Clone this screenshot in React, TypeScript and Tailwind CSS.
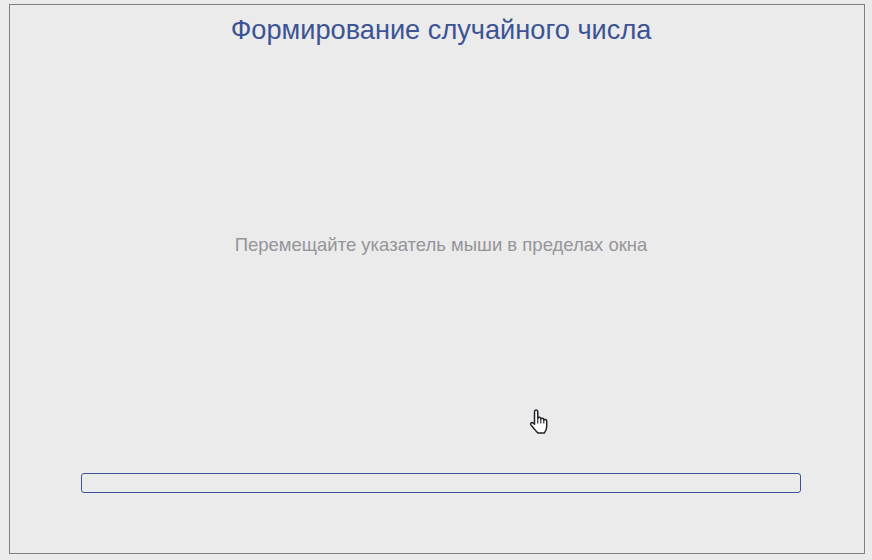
export default function App() {
  return (
    <div className="relative h-[560px] w-[872px] overflow-hidden bg-[#ebebeb] pl-[9px] pt-[4px] font-['Liberation_Sans',Arial,sans-serif]">
      <div className="flex h-[550px] w-[856px] flex-col items-center border border-[#808080] pl-[8px]">
        <h1 className="mt-[8px] h-[34px] text-center text-[27.2px] leading-[34px] font-normal text-[#3c5494]">
          Формирование случайного числа
        </h1>
        <p className="mt-[186px] h-[24px] text-center text-[18.5px] leading-[24px] text-[#95959a]">
          Перемещайте указатель мыши в пределах окна
        </p>
        <div className="mt-[216px] h-[20px] w-[720px] rounded-[3px] border border-[#3c5494]" />
      </div>
      <svg className="absolute left-[529px] top-[408px]" width="22" height="28" viewBox="0 0 22 28">
        <path
          d="M5.500 3.800c0-2.400 3.300-2.400 3.300 0v6.200c.6-1 2.700-1 3 .3l.1.700c.5-1 2.500-.9 2.800.3l.1.800c.6-.9 2.800-.7 2.900.8v5.800c0 3-1.300 4.900-2.400 6.300H9c-1.300-.8-2.600-2.600-3.900-4.300L2 17c-1.200-1.600.9-3.300 2.400-1.800l1.100 1.100Z"
          fill="#ffffff"
          stroke="#22222c"
          strokeWidth="1.500"
          strokeLinejoin="round"
        />
        <path d="M8.800 10v5.500M11.800 11v4.500M14.800 11.800v3.700" stroke="#22222c" strokeWidth="1.100" fill="none" />
      </svg>
    </div>
  );
}
